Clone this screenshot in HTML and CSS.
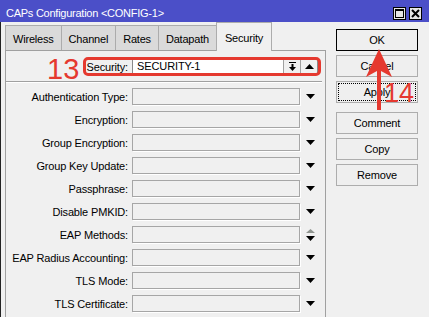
FILE: index.html
```html
<!DOCTYPE html>
<html lang="en">
<head>
  <meta charset="UTF-8" />
  <meta name="viewport" content="width=device-width, initial-scale=1.0" />
  <title>CAPs Configuration</title>
  <link rel="stylesheet" href="styles.css">
</head>
<body>
  <div class="window">
    <div class="titlebar">
      <span class="title">CAPs Configuration &lt;CONFIG-1&gt;</span>
      <div class="win-btns">
        <span class="win-btn">
          <svg width="9" height="9" viewBox="0 0 9 9"><rect x="0.5" y="0.5" width="8" height="8" fill="none" stroke="#000"/><rect x="0" y="0" width="9" height="2" fill="#000"/></svg>
        </span>
        <span class="win-btn">
          <svg width="9" height="9" viewBox="0 0 9 9"><path d="M1 1 L8 8 M8 1 L1 8" stroke="#000" stroke-width="2"/></svg>
        </span>
      </div>
    </div>

    <div class="content">
      <div class="main">
        <div class="tabs">
          <div class="tab">Wireless</div>
          <div class="tab">Channel</div>
          <div class="tab">Rates</div>
          <div class="tab">Datapath</div>
          <div class="tab active">Security</div>
        </div>

        <div class="panel">
          <div class="row">
            <span class="label">Security:</span>
            <div class="combo">
              <span class="combo-text">SECURITY-1</span>
              <span class="combo-btn">
                <svg width="9" height="9" viewBox="0 0 9 9"><rect x="1" y="0" width="7" height="1" fill="#000"/><rect x="3.5" y="2" width="2" height="3" fill="#000"/><polygon points="1,5 8,5 4.5,9" fill="#000"/></svg>
              </span>
              <span class="combo-btn">
                <svg width="9" height="5" viewBox="0 0 9 5"><polygon points="0,5 9,5 4.5,0" fill="#000"/></svg>
              </span>
            </div>
          </div>

          <div class="sep"></div>

          <div class="row">
            <span class="label">Authentication Type:</span>
            <span class="field"></span>
            <span class="drop"><svg width="9" height="5" viewBox="0 0 9 5"><polygon points="0,0 9,0 4.5,5" fill="#000"/></svg></span>
          </div>
          <div class="row">
            <span class="label">Encryption:</span>
            <span class="field"></span>
            <span class="drop"><svg width="9" height="5" viewBox="0 0 9 5"><polygon points="0,0 9,0 4.5,5" fill="#000"/></svg></span>
          </div>
          <div class="row">
            <span class="label">Group Encryption:</span>
            <span class="field"></span>
            <span class="drop"><svg width="9" height="5" viewBox="0 0 9 5"><polygon points="0,0 9,0 4.5,5" fill="#000"/></svg></span>
          </div>
          <div class="row">
            <span class="label">Group Key Update:</span>
            <span class="field"></span>
            <span class="drop"><svg width="9" height="5" viewBox="0 0 9 5"><polygon points="0,0 9,0 4.5,5" fill="#000"/></svg></span>
          </div>
          <div class="row">
            <span class="label">Passphrase:</span>
            <span class="field"></span>
            <span class="drop"><svg width="9" height="5" viewBox="0 0 9 5"><polygon points="0,0 9,0 4.5,5" fill="#000"/></svg></span>
          </div>
          <div class="row">
            <span class="label">Disable PMKID:</span>
            <span class="field"></span>
            <span class="drop"><svg width="9" height="5" viewBox="0 0 9 5"><polygon points="0,0 9,0 4.5,5" fill="#000"/></svg></span>
          </div>
          <div class="row">
            <span class="label">EAP Methods:</span>
            <span class="field"></span>
            <span class="drop"><svg width="9" height="12" viewBox="0 0 9 12"><polygon points="0,4 9,4 4.5,0" fill="#8f948f"/><polygon points="0,7 9,7 4.5,12" fill="#000"/></svg></span>
          </div>
          <div class="row">
            <span class="label">EAP Radius Accounting:</span>
            <span class="field"></span>
            <span class="drop"><svg width="9" height="5" viewBox="0 0 9 5"><polygon points="0,0 9,0 4.5,5" fill="#000"/></svg></span>
          </div>
          <div class="row">
            <span class="label">TLS Mode:</span>
            <span class="field"></span>
            <span class="drop"><svg width="9" height="5" viewBox="0 0 9 5"><polygon points="0,0 9,0 4.5,5" fill="#000"/></svg></span>
          </div>
          <div class="row">
            <span class="label">TLS Certificate:</span>
            <span class="field"></span>
            <span class="drop"><svg width="9" height="5" viewBox="0 0 9 5"><polygon points="0,0 9,0 4.5,5" fill="#000"/></svg></span>
          </div>
        </div>
      </div>

      <div class="side">
        <button class="btn default">OK</button>
        <button class="btn">Cancel</button>
        <button class="btn focus">Apply</button>
        <button class="btn spaced">Comment</button>
        <button class="btn">Copy</button>
        <button class="btn">Remove</button>
      </div>
    </div>

    <!-- annotations -->
    <div class="mark-box"></div>
    <span class="mark-num num-13">13</span>
    <span class="mark-num num-14">14</span>
    <svg class="mark-arrow" width="40" height="70" viewBox="360 45 40 70">
      <path d="M379 49 L392 77 L381 71 L381 110 L377 110 L377 71 L366 77 Z" fill="#e5392f"/>
    </svg>
  </div>
</body>
</html>
```

FILE: styles.css
```css
body {
  margin: 0;
  background: #f0f0f0;
  font-family: "Liberation Sans", Arial, sans-serif;
  font-size: 11px;
  color: #000;
}

.window {
  position: relative;
  width: 429px;
  height: 317px;
  overflow: hidden;
  background: #f0f0f0;
  display: flex;
  flex-direction: column;
}

.titlebar {
  height: 22px;
  flex: none;
  background: #4b4fc8;
  display: flex;
  justify-content: space-between;
  align-items: flex-start;
}

.title {
  color: #fff;
  margin: 7px 0 0 6px;
  font-size: 11px;
  line-height: 13px;
  letter-spacing: -0.25px;
}

.win-btns {
  display: flex;
  gap: 3px;
  margin: 7px 7px 0 0;
}

.win-btn {
  width: 13px;
  height: 13px;
  box-sizing: border-box;
  border: 1px solid #000;
  background: #e6e6e6;
  display: flex;
  align-items: center;
  justify-content: center;
}

.content {
  flex: 1;
  display: flex;
  border-left: 1px solid #222;
}

.main {
  width: 321px;
  margin-left: 4px;
  display: flex;
  flex-direction: column;
}

.tabs {
  height: 28px;
  flex: none;
  display: flex;
  align-items: flex-end;
  position: relative;
  z-index: 1;
}

.tab {
  height: 25px;
  box-sizing: border-box;
  padding: 7px 7px 0;
  margin-right: -1px;
  border: 1px solid #acacac;
  border-bottom: none;
  background: #dadada;
  line-height: 13px;
  letter-spacing: -0.2px;
}

.tab.active {
  height: 29px;
  padding: 9px 8px 0;
  margin-bottom: -1px;
  background: #f0f0f0;
}

.panel {
  flex: 1;
  border: 1px solid #a0a0a0;
  border-bottom: none;
  padding-top: 7px;
}

.row {
  display: grid;
  grid-template-columns: 126px 168px 20px;
  align-items: center;
  height: 17px;
  margin-bottom: 6px;
}

.label {
  text-align: right;
  padding-right: 4px;
  letter-spacing: -0.15px;
  white-space: nowrap;
}

.field {
  height: 17px;
  box-sizing: border-box;
  border: 1px solid #a6a6a6;
  box-shadow: 1px 1px 0 #fff;
}

.drop {
  display: flex;
  justify-content: center;
  align-items: center;
}

.combo {
  grid-column: 2 / 4;
  width: 186px;
  height: 17px;
  box-sizing: border-box;
  display: flex;
  border: 1px solid #8a8a8a;
  background: #fff;
}

.combo-text {
  flex: 1;
  padding-left: 4px;
  line-height: 15px;
  letter-spacing: -0.1px;
}

.combo-btn {
  width: 16px;
  border-left: 1px solid #a0a0a0;
  background: #f0f0f0;
  display: flex;
  align-items: center;
  justify-content: center;
}

.sep {
  height: 1px;
  margin: 1px 3px 6px 0;
  background: #a0a0a0;
  box-shadow: 0 1px 0 #fff;
}

.side {
  width: 82px;
  margin-left: 10px;
  padding-top: 7px;
  display: flex;
  flex-direction: column;
  gap: 4px;
}

.btn {
  height: 22px;
  padding: 0;
  box-sizing: border-box;
  border: 1px solid #adadad;
  background: #efefef;
  font-family: inherit;
  font-size: 11px;
  letter-spacing: -0.2px;
  color: #000;
}

.btn.default {
  border-color: #000;
}

.btn.focus {
  outline: 1px dotted #000;
  outline-offset: -3px;
}

.btn.spaced {
  margin-top: 5px;
}

.mark-box {
  position: absolute;
  left: 83px;
  top: 57px;
  width: 238px;
  height: 19px;
  box-sizing: border-box;
  border: 3px solid #e5392f;
  border-radius: 5px;
}

.mark-num {
  position: absolute;
  color: #e5392f;
  font-family: "Liberation Sans", Arial, sans-serif;
}

.num-13 {
  left: 47px;
  top: 55px;
  font-size: 29px;
  line-height: 29px;
}

.num-14 {
  left: 384px;
  top: 80px;
  font-size: 27px;
  line-height: 27px;
}

.mark-arrow {
  position: absolute;
  left: 360px;
  top: 45px;
}
```
